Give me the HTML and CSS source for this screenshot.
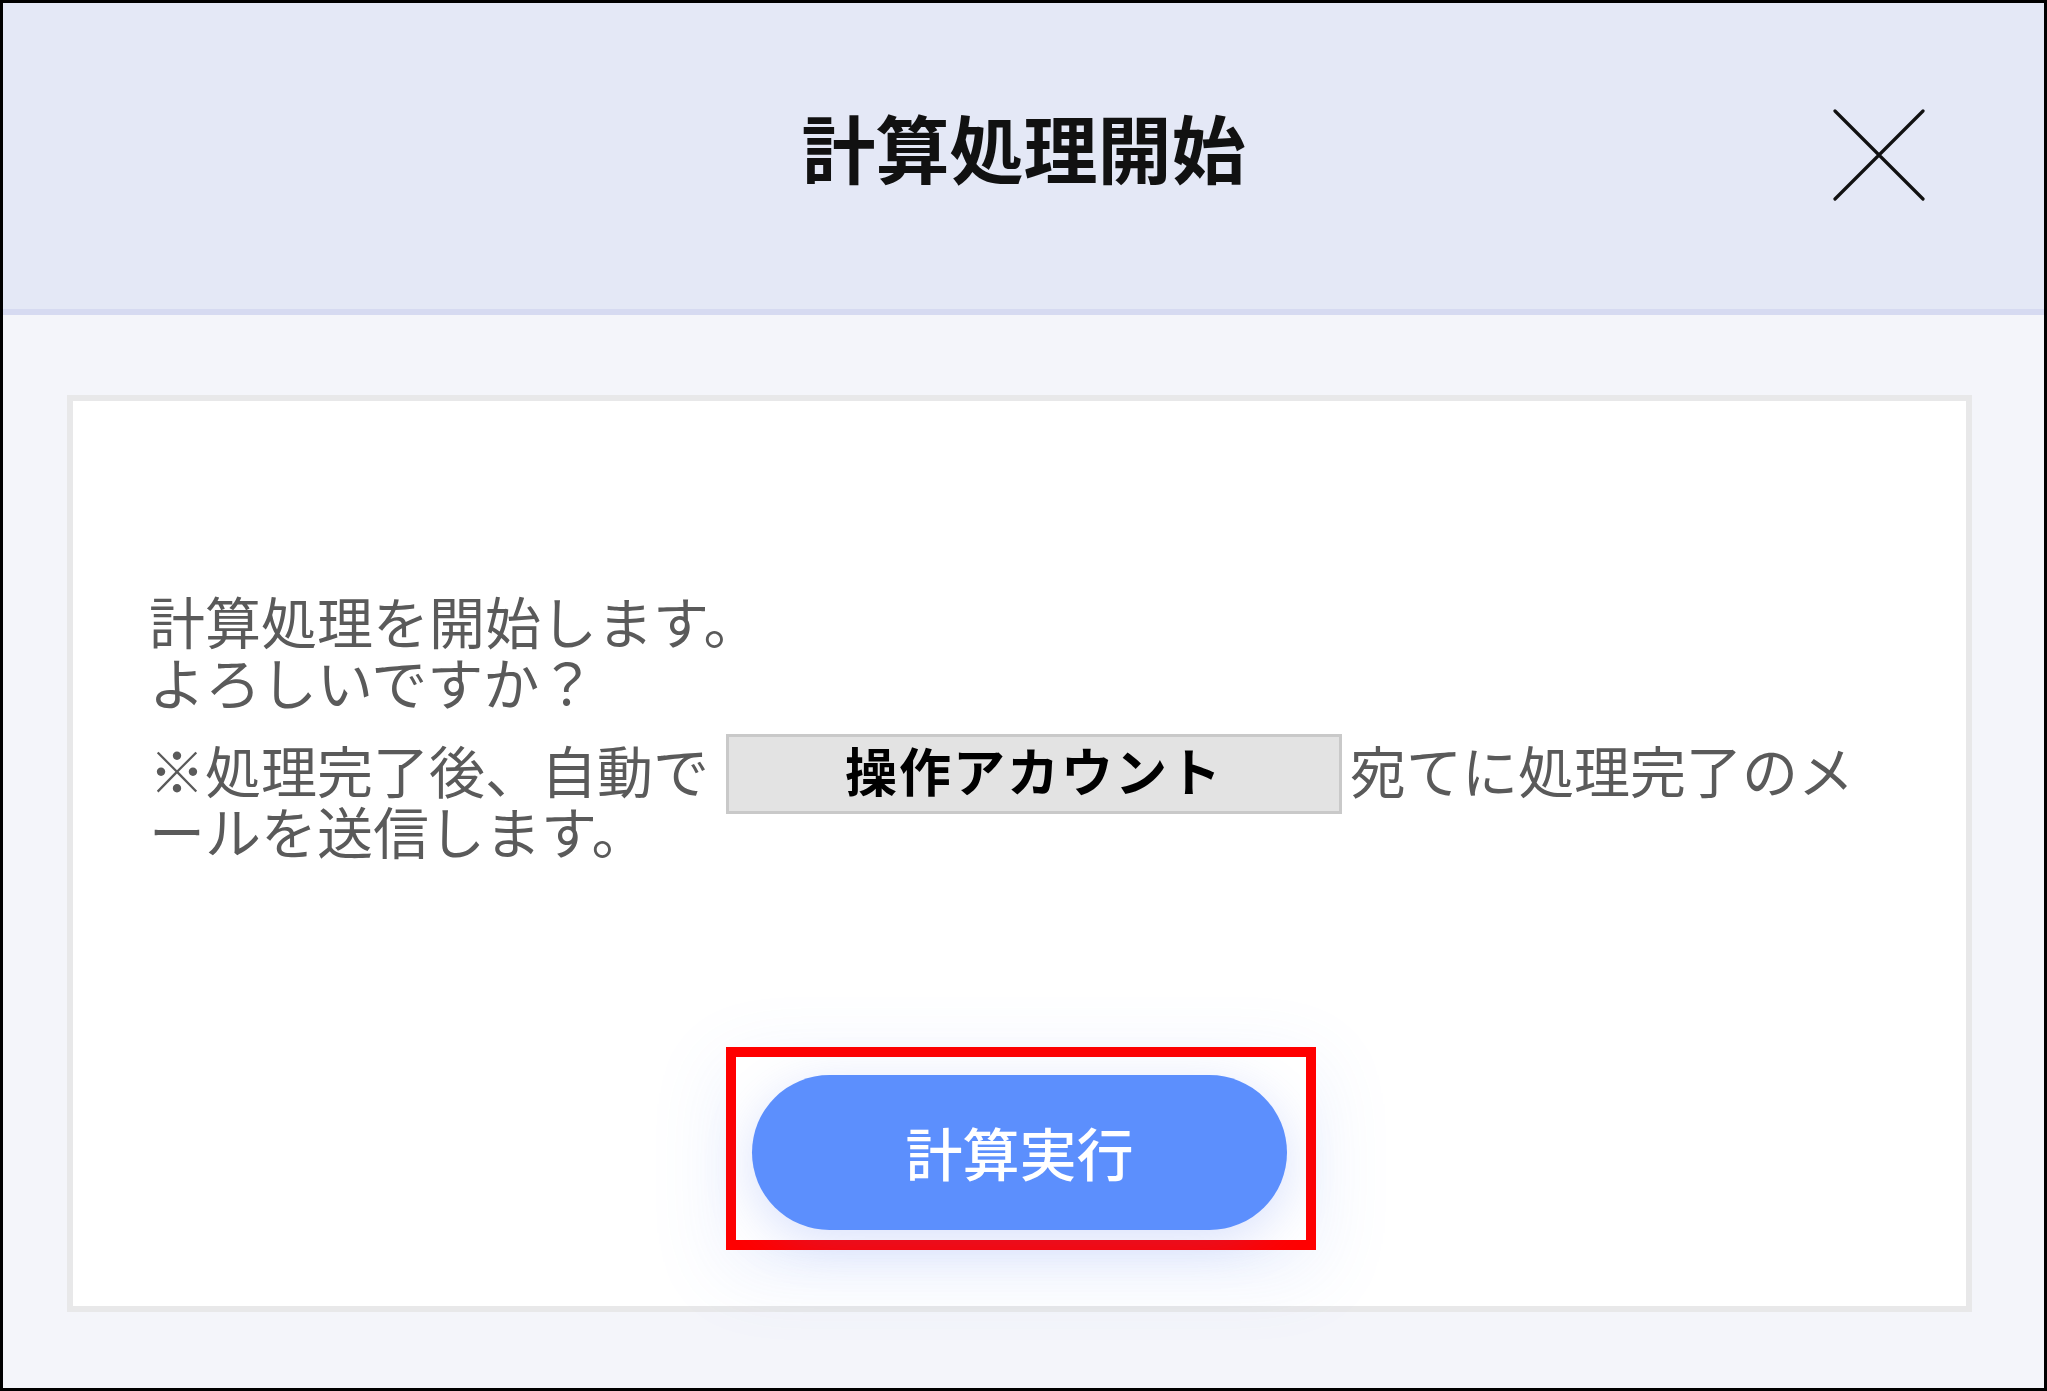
FILE: index.html
```html
<!DOCTYPE html>
<html lang="ja">
<head>
<meta charset="utf-8">
<title>計算処理開始</title>
<link rel="stylesheet" href="styles.css">
</head>
<body>
<div class="frame">
  <header class="header">
    <div class="header-side"></div>
    <h1 class="title">計算処理開始</h1>
    <div class="header-side header-right">
      <button class="close" aria-label="閉じる">
        <svg width="92" height="92" viewBox="0 0 92 92"><path d="M2 2 L90 90 M90 2 L2 90" stroke="#111" stroke-width="3.2" stroke-linecap="round" fill="none"/></svg>
      </button>
    </div>
  </header>
  <main class="card">
    <div class="message">
      <p class="para">計算処理を開始します。<br>よろしいですか？</p>
      <p class="para">※処理完了後、自動で<span class="redact">操作アカウント</span>宛てに処理完了のメールを送信します。</p>
    </div>
    <div class="highlight">
      <button class="run">計算実行</button>
    </div>
  </main>
</div>
</body>
</html>
```
FILE: styles.css
```css
* { box-sizing: border-box; }
html, body { margin: 0; padding: 0; }
body {
  font-family: "Noto Sans CJK JP", "Noto Sans", sans-serif;
  background: #ffffff;
}
.frame {
  width: 2047px;
  height: 1391px;
  border: 3px solid #000;
  background: #f4f5fa;
  display: flex;
  flex-direction: column;
}
.header {
  height: 312px;
  flex: none;
  background: #e4e8f6;
  border-bottom: 6px solid #d6daf1;
  display: grid;
  grid-template-columns: 1fr auto 1fr;
  align-items: center;
}
.title {
  margin: 0;
  padding-bottom: 20px;
  font-size: 74px;
  font-weight: 700;
  color: #111;
  line-height: 1;
}
.header-right {
  display: flex;
  justify-content: flex-end;
  padding-right: 119px;
}
.close {
  border: 0;
  padding: 0;
  margin: 0 0 2px 0;
  background: transparent;
  width: 92px;
  height: 92px;
  display: block;
}
.close svg { display: block; }
.card {
  flex: 1;
  margin: 80px 72px 76px 64px;
  background: #fff;
  border: 6px solid #e8e8e9;
  display: flex;
  flex-direction: column;
  align-items: center;
}
.message {
  align-self: stretch;
  padding: 188px 77px 0 76px;
  color: #5a5a5a;
  font-size: 56px;
  line-height: 61px;
}
.para { margin: 0; }
.para + .para { margin-top: 27px; }
.redact {
  display: inline-block;
  vertical-align: top;
  width: 616px;
  height: 80px;
  margin: -4px 8px -15px 17px;
  border: 3px solid #c9c9c9;
  background: #e3e3e3;
  color: #000;
  font-weight: 700;
  font-size: 52px;
  letter-spacing: 2px;
  line-height: 66px;
  text-align: center;
  padding-bottom: 8px;
}
.highlight {
  margin-top: 187px;
  border: 10px solid #ff0000;
  padding: 18px 19px 10px 16px;
  margin-left: 3px;
  box-shadow: 0 20px 80px rgba(90, 130, 240, 0.12);
}
.run {
  display: block;
  width: 535px;
  height: 155px;
  border: 0;
  border-radius: 78px;
  background: #5c8ffd;
  color: #fff;
  font-family: "Noto Sans CJK JP", "Noto Sans", sans-serif;
  font-size: 57px;
  font-weight: 500;
  padding: 0 0 4px 0;
  box-shadow: 0 12px 50px rgba(80, 120, 240, 0.22);
}
```
